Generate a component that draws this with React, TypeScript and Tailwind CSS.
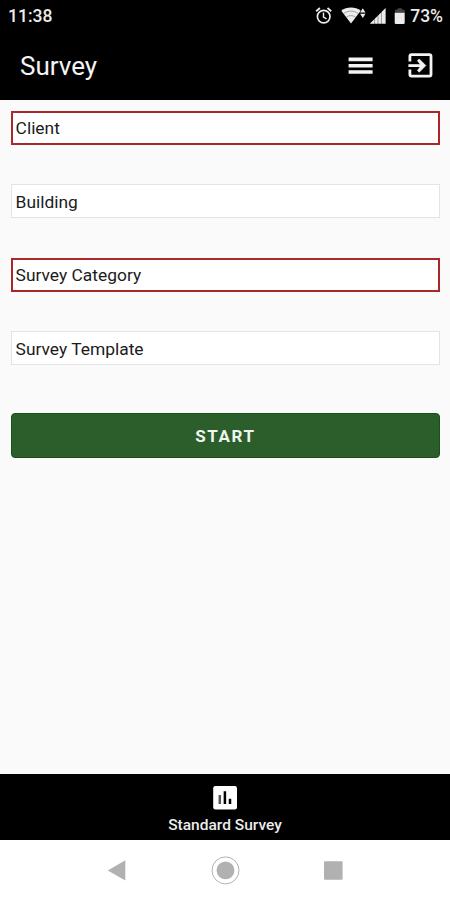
import React from "react";
import clsx from "clsx";

interface FieldProps {
    label: string;
    required?: boolean;
}

const fields: FieldProps[] = [
    { label: "Client", required: true },
    { label: "Building" },
    { label: "Survey Category", required: true },
    { label: "Survey Template" },
];

const StatusIcons: React.FC = () => (
    <div className="flex items-center text-[#ececec]">
        <svg width="18" height="18" viewBox="0 0 18 18" fill="none" stroke="currentColor">
            <circle cx="8.7" cy="9.6" r="6.3" strokeWidth="1.7" />
            <path d="M1.2 4.2 4.9 1M16.2 4.2 12.5 1" strokeWidth="1.8" />
            <path d="M8.5 5.6v4.4l3 1.8" strokeWidth="1.4" />
        </svg>
        <svg className="ml-2" width="26" height="18" viewBox="0 0 26 18" fill="currentColor">
            <path d="M0.3 3.8C5.4-.6 14.6-.6 19.7 3.8L10 16.6z" />
            <path d="M2.6 6.7c4.4-3.5 10.4-3.5 14.8 0M5.3 10.2c2.7-2.1 6.7-2.1 9.4 0" fill="none" stroke="#000" strokeOpacity=".45" strokeWidth="0.7" />
            <path d="m21.8 1.2 2.7 4.2h-5.4zM21.8 11l2.7-4.2h-5.4z" />
        </svg>
        <svg className="ml-[3px]" width="17" height="18" viewBox="0 0 17 18" fill="currentColor">
            <path d="M-.2 16.8 15.6 1V16.8z" />
            <path d="M4.6 10v7M8 7v10M11.4 4v13" stroke="#000" strokeOpacity=".5" strokeWidth="0.7" />
        </svg>
        <svg className="ml-[7px]" width="12" height="18" viewBox="0 0 12 18" fill="currentColor">
            <path d="M3.6 1.2h4.5v1.5h2.6v3H1v-3h2.6z" fillOpacity=".28" />
            <path d="M.7 5.7h10v10.1q0 1.2-1.2 1.2H1.9Q.7 17 .7 15.8z" />
        </svg>
        <span className="ml-[4px] pt-[2px] text-[17.5px] leading-none font-medium">73%</span>
    </div>
);

const Header: React.FC = () => (
    <header className="flex h-[68px] items-center justify-between bg-black pr-[16px] pl-[20px] text-[#f4f4f4]">
        <h1 className="text-[26px] leading-none">Survey</h1>
        <div className="flex items-center gap-[34px]">
            <button aria-label="Menu">
                <svg width="26" height="26" viewBox="0 0 26 26" fill="none" stroke="currentColor" strokeWidth="3.6">
                    <path d="M.6 6.4h24M.6 12.7h24M.6 19h24" />
                </svg>
            </button>
            <button aria-label="Exit">
                <svg width="26" height="26" viewBox="0 0 26 26" fill="none" stroke="currentColor" strokeWidth="2.8">
                    <path d="M1.9 8.6V3.2q0-1.6 1.6-1.6H21.4q1.6 0 1.6 1.6v18.4q0 1.6-1.6 1.6H3.5q-1.6 0-1.6-1.6v-5.2" />
                    <path d="M.4 12.6h14" />
                    <path d="m11.2 5.9 6.7 6.7-6.7 6.7-1.8-1.8 3.8-4.9-3.8-4.9z" fill="currentColor" strokeWidth=".6" />
                </svg>
            </button>
        </div>
    </header>
);

const Field: React.FC<FieldProps> = ({ label, required }) => (
    <div
        className={clsx(
            "flex h-[34px] items-center bg-white pt-[2.6px] text-[17.4px] leading-none text-[#1b1b1b]",
            required ? "border-2 border-[#a8272b] pl-[2.6px]" : "border border-[#e4e4e4] pl-[3.6px]"
        )}
    >
        {label}
    </div>
);

const SystemBar: React.FC = () => (
    <div className="flex h-[60px] items-center justify-between bg-white px-[106px] text-[#b1b1b1]">
        <svg width="20" height="30" viewBox="0 0 20 30" fill="currentColor">
            <path d="M1.8 15.4 19.3 5.2v20.4z" />
        </svg>
        <svg width="30" height="30" viewBox="0 0 30 30" fill="currentColor">
            <circle cx="15.5" cy="15.4" r="8.9" />
            <circle cx="15.5" cy="15.4" r="13.5" fill="none" stroke="currentColor" strokeWidth="1" />
        </svg>
        <svg width="20" height="30" viewBox="0 0 20 30" fill="currentColor">
            <rect x="0" y="6.2" width="18.6" height="18.6" rx="1" />
        </svg>
    </div>
);

const App: React.FC = () => {
    return (
        <div className="flex h-[900px] w-[450px] flex-col bg-[#fafafa] font-['Roboto',sans-serif]">
            <div className="flex h-8 items-center justify-between bg-black pr-[7px] pl-[8px] text-[#ececec]">
                <span className="pt-[2px] text-[17.5px] leading-none font-medium">11:38</span>
                <StatusIcons />
            </div>
            <Header />
            <main className="flex flex-1 flex-col pt-[10.6px] pr-[10px] pl-[11px]">
                <div className="flex flex-col gap-[39.6px]">
                    {fields.map((field) => (
                        <Field key={field.label} {...field} />
                    ))}
                </div>
                <button className="mt-[47.6px] h-[45px] rounded-[4px] border border-[#175019] bg-[#2b5e2b] pt-[2px] text-[17px] leading-none font-bold tracking-[1.6px] text-[#f0f5f0]">
                    START
                </button>
            </main>
            <nav className="flex h-[66px] flex-col items-center bg-black pt-[11px] text-[#ececec]">
                <svg width="26" height="26" viewBox="0 0 26 26">
                    <rect x="1.2" y="1" width="23.8" height="23.5" rx="2.2" fill="#fff" />
                    <path d="M7.8 10v9" stroke="#555" strokeWidth="2.5" />
                    <path d="M12.9 6.3V19M18 13.8V19" stroke="#000" strokeWidth="2.5" />
                </svg>
                <span className="mt-[7px] text-[15.5px] leading-none font-medium">Standard Survey</span>
            </nav>
            <SystemBar />
        </div>
    );
};

export default App;
